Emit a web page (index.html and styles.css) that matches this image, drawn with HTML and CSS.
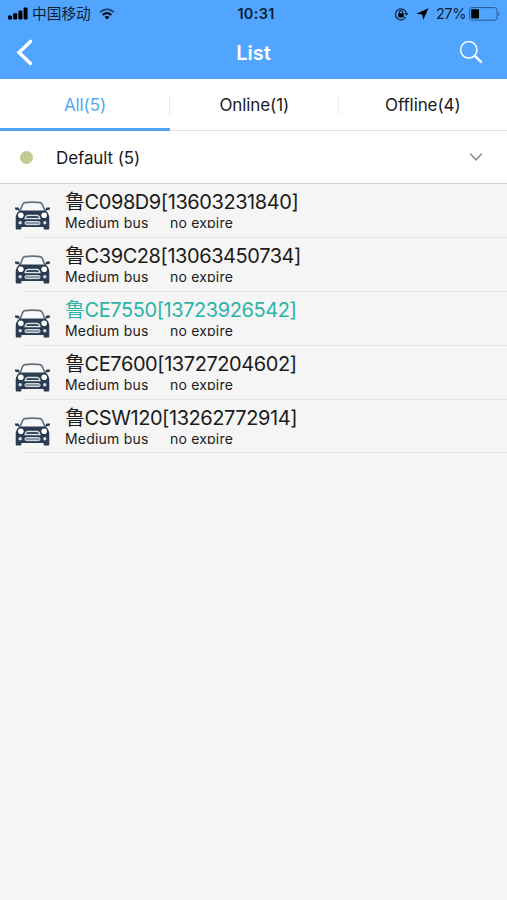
FILE: index.html
```
<!DOCTYPE html>
<html lang="en">
<head>
  <meta charset="UTF-8">
  <meta name="viewport" content="width=device-width, initial-scale=1.0">
  <title>List</title>
  <link rel="stylesheet" href="styles.css">
</head>
<body>
  <svg width="0" height="0" class="sprite">
    <symbol id="car" viewBox="0 0 37 30">
      <path d="M5.8 11.5 L8.6 4.6 Q9.3 2.9 11 2.6 Q18.5 1.6 26 2.6 Q27.7 2.9 28.4 4.6 L31.2 11.5" fill="#f7f8f9" stroke="#66707a" stroke-width="1.6"/>
      <path d="M1 7.4 H4.4 L5.8 9.4 L5.4 10.6 Q1 10.4 1 8.8Z M36 7.4 H32.6 L31.2 9.4 L31.6 10.6 Q36 10.4 36 8.8Z" fill="#2b3c51"/>
      <path d="M5.8 10.6 H31.2 Q35 13 35.3 18 V28.4 Q35.3 29.4 34.3 29.4 H30.6 Q29.6 29.4 29.6 28.4 V27 H7.4 V28.4 Q7.4 29.4 6.4 29.4 H2.7 Q1.7 29.4 1.7 28.4 V18 Q2 13 5.8 10.6Z" fill="#2b3c51"/>
      <path d="M11 18.6 Q11.8 15.4 14 15.4 H23 Q25.2 15.4 26 18.6Z" fill="#3c4d61" stroke="#dfe4e9" stroke-width="1.1"/>
      <rect x="11" y="21.6" width="15" height="3" rx="1.3" fill="#8794a2" stroke="#dfe4e9" stroke-width="1"/>
      <circle cx="6.8" cy="15.2" r="2.8" fill="#fff"/>
      <circle cx="30.2" cy="15.2" r="2.8" fill="#fff"/>
      <circle cx="6.2" cy="22.8" r="1.7" fill="#d5dbe1"/>
      <circle cx="30.8" cy="22.8" r="1.7" fill="#d5dbe1"/>
    </symbol>
  </svg>

  <header class="header">
    <div class="status">
      <div class="status-left">
        <svg class="signal" width="20" height="13" viewBox="0 0 20 13">
          <rect x="0" y="8.5" width="4" height="4" rx="1"/>
          <rect x="5.2" y="6.2" width="4" height="6.3" rx="1"/>
          <rect x="10.4" y="3.5" width="4" height="9" rx="1"/>
          <rect x="15.6" y="0.5" width="4" height="12" rx="1"/>
        </svg>
        <span class="carrier">中国移动</span>
        <svg class="wifi" width="16" height="12" viewBox="0 0 16 12">
          <path d="M1 4.2 Q8 -1.8 15 4.2" fill="none" stroke="#1f4978" stroke-width="2"/>
          <path d="M3.5 7 Q8 3.2 12.5 7" fill="none" stroke="#061523" stroke-width="2"/>
          <path d="M5.6 9 Q8 7.2 10.4 9 L8 11.5Z" fill="#000"/>
        </svg>
      </div>
      <span class="time">10:31</span>
      <div class="status-right">
        <svg width="15" height="14" viewBox="0 0 15 14">
          <path d="M11.8 10 A5.5 5.5 0 1 1 12.3 6.2" fill="none" stroke="#102b49" stroke-width="1.3"/>
          <path d="M10.2 6 H14.6 L12.4 8.8Z" fill="#102b49"/>
          <rect x="4.2" y="6.2" width="5.6" height="4.2" rx=".6"/>
          <path d="M5.3 6.5 V5.2 Q5.3 3.7 7 3.7 T8.7 5.2 V6.5" fill="none" stroke="#000" stroke-width="1"/>
        </svg>
        <svg class="location" width="13" height="12" viewBox="0 0 13 12">
          <path d="M12.5 .2 L7.3 11.8 L6.2 6.5 L.3 5.7Z"/>
        </svg>
        <span class="percent">27%</span>
        <svg class="battery" width="32" height="14" viewBox="0 0 32 14">
          <rect x=".6" y=".6" width="27.5" height="12.6" rx="2.6" fill="none" stroke="#28588d" stroke-width="1"/>
          <rect x="2.2" y="2.2" width="7.8" height="9.4" rx="1"/>
          <path d="M29.4 5 Q31.6 7 29.4 9Z" fill="#28588d"/>
        </svg>
      </div>
    </div>
    <div class="navbar">
      <svg class="back" width="18" height="28" viewBox="0 0 18 28">
        <path d="M14.5 2.4 L3 13.4 L14.5 24.4" fill="none" stroke="#fff" stroke-width="3.4" stroke-linecap="round" stroke-linejoin="miter"/>
      </svg>
      <h1 class="title">List</h1>
      <svg class="search" width="24" height="24" viewBox="0 0 24 24">
        <circle cx="9.8" cy="8.8" r="8.2" fill="none" stroke="#fff" stroke-width="1.5"/>
        <path d="M15.8 14.8 L22 20.9" stroke="#fff" stroke-width="2.4" stroke-linecap="round"/>
      </svg>
    </div>
  </header>

  <nav class="tabs">
    <a class="tab active">All(5)</a>
    <a class="tab">Online(1)</a>
    <a class="tab">Offline(4)</a>
  </nav>

  <div class="group">
    <span class="dot"></span>
    <span class="group-name">Default (5)</span>
    <svg class="chevron" width="14" height="10" viewBox="0 0 14 10">
      <path d="M1.2 1.8 L7 7.8 L12.8 1.8" fill="none" stroke="#8b8b8b" stroke-width="1.5"/>
    </svg>
  </div>

  <ul class="list">
    <li class="item">
      <svg class="car"><use href="#car"/></svg>
      <div class="info">
        <div class="plate"><span class="han">鲁</span>C098D9[13603231840]</div>
        <div class="detail"><span class="type">Medium bus</span><span>no expire</span></div>
      </div>
    </li>
    <li class="item">
      <svg class="car"><use href="#car"/></svg>
      <div class="info">
        <div class="plate"><span class="han">鲁</span>C39C28[13063450734]</div>
        <div class="detail"><span class="type">Medium bus</span><span>no expire</span></div>
      </div>
    </li>
    <li class="item online">
      <svg class="car"><use href="#car"/></svg>
      <div class="info">
        <div class="plate"><span class="han">鲁</span>CE7550[13723926542]</div>
        <div class="detail"><span class="type">Medium bus</span><span>no expire</span></div>
      </div>
    </li>
    <li class="item">
      <svg class="car"><use href="#car"/></svg>
      <div class="info">
        <div class="plate"><span class="han">鲁</span>CE7600[13727204602]</div>
        <div class="detail"><span class="type">Medium bus</span><span>no expire</span></div>
      </div>
    </li>
    <li class="item">
      <svg class="car"><use href="#car"/></svg>
      <div class="info">
        <div class="plate"><span class="han">鲁</span>CSW120[13262772914]</div>
        <div class="detail"><span class="type">Medium bus</span><span>no expire</span></div>
      </div>
    </li>
  </ul>
</body>
</html>
```
FILE: styles.css
```
* {
  box-sizing: border-box;
}
body {
  margin: 0;
  min-height: 100vh;
  background: #f5f5f5;
  font-family: Inter, "Noto Sans CJK SC", sans-serif;
  color: #1b1b1b;
}
svg {
  display: block;
  flex-shrink: 0;
}
.sprite {
  position: absolute;
}
.header {
  height: 79px;
  background: #52a5ff;
}
.status {
  display: grid;
  grid-template-columns: 1fr auto 1fr;
  align-items: center;
  height: 27px;
  padding: 0 6px 0 8px;
  font-size: 14px;
  color: #0b1f35;
}
.status-left,
.status-right {
  display: flex;
  align-items: center;
}
.status-right {
  justify-content: flex-end;
}
.carrier {
  margin-left: 4px;
  font-family: "Noto Sans CJK SC", sans-serif;
  font-size: 14.7px;
  line-height: 18px;
  margin-top: -1px;
}
.wifi {
  margin-left: 8px;
}
.time {
  padding-left: 3px;
  font-size: 14.5px;
  font-weight: 600;
  letter-spacing: 0.3px;
}
.location {
  margin-left: 7px;
}
.percent {
  margin: 0 3px 0 7px;
  font-size: 14.5px;
  letter-spacing: -0.4px;
}
.navbar {
  display: flex;
  align-items: center;
  justify-content: space-between;
  height: 52px;
  padding: 0 24px 0 16px;
}
.title {
  margin: 0;
  padding-left: 14px;
  font-size: 20px;
  font-weight: 600;
  line-height: 24px;
  color: #fff;
}
.tabs {
  display: flex;
  height: 52px;
  background: #fff;
  border-bottom: 1px solid #e2e2e2;
}
.tab {
  display: flex;
  flex: 1;
  align-items: center;
  justify-content: center;
  height: 52px;
  padding-top: 2px;
  font-size: 17px;
  letter-spacing: -0.1px;
  border-bottom: 3px solid transparent;
  background: linear-gradient(#ececec, #ececec) right 16px / 1px 20px no-repeat;
}
.tab:first-child {
  flex: 0 0 170px;
}
.tab:last-child {
  background: none;
}
.tab.active {
  color: #52a8f3;
  border-bottom-color: #52a5f5;
}
.group {
  display: flex;
  align-items: center;
  height: 53px;
  padding: 0 24px 0 20px;
  background: #fff;
  border-bottom: 1px solid #cfcfcf;
}
.dot {
  width: 13px;
  height: 13px;
  border-radius: 50%;
  background: #c5ca93;
}
.group-name {
  margin: 1px 0 0 23px;
  font-size: 17px;
  letter-spacing: -0.1px;
}
.chevron {
  margin-left: auto;
}
.list {
  margin: 0;
  padding: 0;
  list-style: none;
}
.item {
  display: flex;
  height: 53.9px;
  padding: 4px 0 0 14px;
  background: linear-gradient(#e2e2e2, #e2e2e2) 25px 100% / 100% 1px no-repeat;
}
.car {
  width: 37px;
  height: 30px;
  margin-top: 12px;
}
.info {
  margin-left: 14px;
}
.plate {
  height: 26px;
  font-size: 20px;
  line-height: 25px;
  letter-spacing: -0.43px;
  white-space: nowrap;
}
.han {
  font-family: "Noto Sans CJK SC", sans-serif;
}
.online .plate {
  color: #2bb5a8;
}
/* fixed height cuts the descenders */
.detail {
  display: flex;
  height: 14px;
  font-size: 14px;
  line-height: 17px;
  letter-spacing: 0.2px;
  overflow: hidden;
}
.type {
  width: 105px;
}
```
